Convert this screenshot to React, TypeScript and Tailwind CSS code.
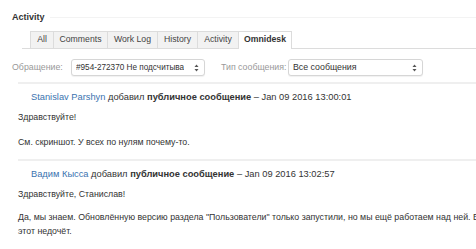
import React from 'react'

const tabs = [
  { label: 'All', w: 'w-[23px]' },
  { label: 'Comments', w: 'w-[54px]' },
  { label: 'Work Log', w: 'w-[50px]' },
  { label: 'History', w: 'w-[40px]' },
  { label: 'Activity', w: 'w-[41px]' },
]

function SelectArrows() {
  return (
    <svg width="5" height="8" viewBox="0 0 5 8" className="shrink-0">
      <path d="M2.5 0.5 L4.5 3 L0.5 3 Z" fill="#555" />
      <path d="M2.5 7.5 L4.5 5 L0.5 5 Z" fill="#555" />
    </svg>
  )
}

function Select({ value, w, size }: { value: string; w: string; size: string }) {
  return (
    <div className={`${w} h-[17px] flex items-center justify-between gap-[6px] pl-[4px] pr-[5px] border border-[#d6d6d6] rounded-[3px] bg-white shadow-[0_1px_1px_rgba(0,0,0,0.06)]`}>
      <span className={`${size} leading-[15px] text-[#333] whitespace-nowrap overflow-hidden`}>{value}</span>
      <SelectArrows />
    </div>
  )
}

function Author({ name, date }: { name: string; date: string }) {
  return (
    <div className="pl-[13px] text-[9.3px] leading-[14px] text-[#333] whitespace-nowrap">
      <span className="text-[#3b73af]">{name}</span> добавил <span className="font-bold">публичное сообщение</span> – {date}
    </div>
  )
}

export default function App() {
  return (
    <div className="w-[476px] h-[249px] overflow-hidden bg-white font-['Liberation_Sans',Arial,sans-serif] text-[#333]">
      {/* Header */}
      <div className="pt-[12px] pl-[12px] flex items-center gap-[5px]">
        <span className="text-[9px] leading-[11px] font-bold text-[#333]">Activity</span>
        <div className="flex-1 h-px bg-[#f3f3f3]"></div>
      </div>

      {/* Tabs */}
      <div className="mt-[8px] ml-[22px] border-b border-[#dcdcdc] flex pl-[8px] h-[18px]">
        {tabs.map((t) => (
          <div key={t.label} className={`${t.w} h-[17px] border-l border-t border-[#dcdcdc] bg-[#f2f2f2] flex items-center justify-center text-[8.7px] text-[#444] whitespace-nowrap`}>
            {t.label}
          </div>
        ))}
        <div className="w-[54px] h-[18px] border-l border-t border-r border-[#dcdcdc] bg-white flex items-center justify-center pb-[1px] text-[8.7px] font-bold text-[#333]">
          Omnidesk
        </div>
      </div>

      {/* Filters */}
      <div className="mt-[10px] pl-[12px] flex items-center h-[17px]">
        <span className="text-[8.8px] text-[#999] w-[59px]">Обращение:</span>
        <Select value="#954-272370 Не подсчитыва" w="w-[134px]" size="text-[8.2px]" />
        <span className="ml-[16px] text-[8.8px] text-[#999] w-[67px]">Тип сообщения:</span>
        <Select value="Все сообщения" w="w-[135px]" size="text-[8.8px]" />
      </div>

      <div className="mt-[6px] ml-[18px] h-[2px] bg-[#efefef]"></div>

      {/* Message 1 */}
      <div className="pl-[18px] pt-[6px] text-[8.8px] leading-[14px] text-[#333]">
        <Author name="Stanislav Parshyn" date="Jan 09 2016 13:00:01" />
        <p className="mt-[6px]">Здравствуйте!</p>
        <p className="mt-[11px]">См. скриншот. У всех по нулям почему-то.</p>
      </div>

      <div className="mt-[10px] ml-[18px] h-[2px] bg-[#efefef]"></div>

      {/* Message 2 */}
      <div className="pl-[18px] pt-[6px] text-[8.8px] leading-[14px] text-[#333]">
        <Author name="Вадим Кысса" date="Jan 09 2016 13:02:57" />
        <p className="mt-[6px]">Здравствуйте, Станислав!</p>
        <p className="mt-[9px] whitespace-nowrap">
          Да, мы знаем. Обновлённую версию раздела "Пользователи" только запустили, но мы ещё работаем над ней. Вскоре исправим
          <br />
          этот недочёт.
        </p>
      </div>
    </div>
  )
}
